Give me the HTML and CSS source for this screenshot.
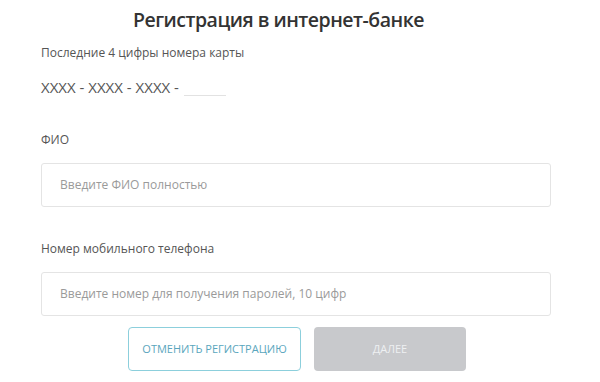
FILE: index.html
```html
<!DOCTYPE html>
<html lang="ru">
  <head>
    <meta charset="UTF-8" />
    <title>Регистрация в интернет-банке</title>
    <link rel="stylesheet" href="styles.css">
  </head>
  <body>
    <div class="reg-form">
      <h1 class="title">Регистрация в интернет-банке</h1>

      <div class="field card-field">
        <div class="label">Последние 4 цифры номера карты</div>
        <div class="card-number">
          <span class="card-mask">XXXX - XXXX - XXXX -</span>
          <span class="card-last"></span>
        </div>
      </div>

      <div class="field">
        <div class="label">ФИО</div>
        <div class="input">Введите ФИО полностью</div>
      </div>

      <div class="field phone-field">
        <div class="label">Номер мобильного телефона</div>
        <div class="input">Введите номер для получения паролей, 10 цифр</div>
      </div>

      <div class="buttons">
        <div class="btn btn-cancel">ОТМЕНИТЬ РЕГИСТРАЦИЮ</div>
        <div class="btn btn-next">ДАЛЕЕ</div>
      </div>
    </div>
  </body>
</html>
```

FILE: styles.css
```css
body, html {
    margin: 0;
    padding: 0;
    background-color: #fff;
    font-family: "Open Sans", Arial, sans-serif;
    color: #444;
}

.reg-form {
    width: 510px;
    padding: 0 0 0 41px;
}

.title {
    margin: 0;
    padding: 6px 0 0 92px;
    font-size: 19.5px;
    font-weight: 600;
    letter-spacing: -0.5px;
    line-height: 28px;
    color: #333;
}

.field {
    margin-top: 36px;
}

.card-field {
    margin-top: 11px;
}

.phone-field {
    margin-top: 34px;
}

.label {
    font-size: 12px;
    line-height: 16px;
    color: #555;
}

.card-number {
    display: flex;
    align-items: flex-end;
    margin-top: 13px;
    height: 22px;
}

.card-mask {
    font-size: 15px;
    color: #555;
    line-height: 18px;
}

.card-last {
    display: inline-block;
    width: 42px;
    margin-left: 5px;
    border-bottom: 1px solid #e2e2e2;
}

.input {
    box-sizing: border-box;
    height: 44px;
    margin-top: 15px;
    padding: 0 18px;
    border: 1px solid #e4e4e4;
    border-radius: 3px;
    font-size: 12px;
    line-height: 42px;
    color: #9a9a9a;
}

.buttons {
    display: flex;
    gap: 13px;
    margin: 11px 0 0 87px;
}

.btn {
    box-sizing: border-box;
    height: 44px;
    border-radius: 4px;
    font-size: 11px;
    line-height: 44px;
    text-align: center;
}

.btn-cancel {
    width: 173px;
    border: 1px solid #8ccfdc;
    line-height: 42px;
    color: #5aa6bd;
}

.btn-next {
    width: 152px;
    background-color: #c8c9cc;
    color: #eef0f2;
}
```
